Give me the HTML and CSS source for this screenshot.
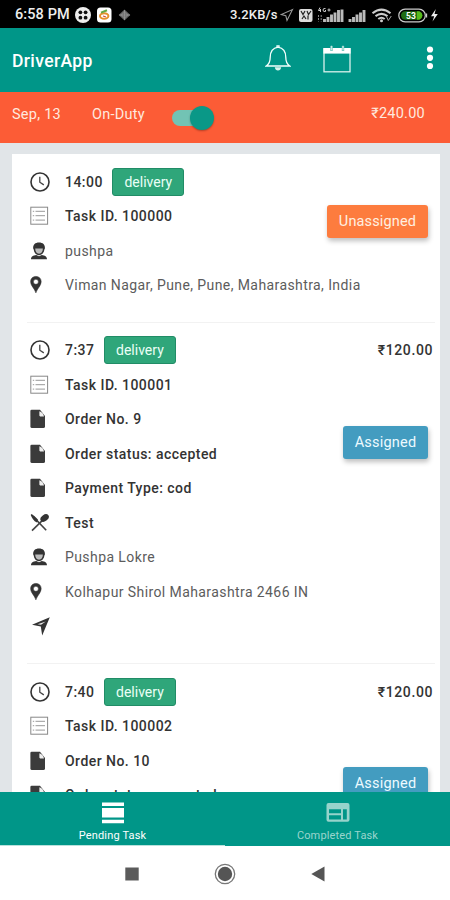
FILE: index.html
```html
<!DOCTYPE html>
<html lang="en">
<head>
<meta charset="utf-8">
<meta name="viewport" content="width=device-width, initial-scale=1">
<title>DriverApp</title>
<link rel="stylesheet" href="styles.css">
</head>
<body>
<svg class="sprite" aria-hidden="true">
  <symbol id="clock" viewBox="0 0 20 20"><circle cx="10" cy="10" r="9" fill="none" stroke="#333" stroke-width="1.6"/><path d="M9.8 4.8v5.4l4 2.7" fill="none" stroke="#444" stroke-width="1.3"/></symbol>
  <symbol id="list" viewBox="0 0 20 20"><rect x=".8" y="1.2" width="16.8" height="17" fill="none" stroke="#888" stroke-width="1"/><path d="M5.5 5.3H15M5.5 9.7H15M5.5 14.1H15M2.8 5.3h1.4M2.8 9.7h1.4M2.8 14.1h1.4" stroke="#999" stroke-width="1"/></symbol>
  <symbol id="doc" viewBox="0 0 20 20"><path d="M1.600 .8H10L15 7V17.400Q15 19 13.400 19H2Q.4 19 .4 17.400V2Q.4 .8 1.600 .8Z" fill="#3b3b3b"/><path d="M9.400 2.200C11.800 3 13.600 4.900 14 7.400H10.200Q9.400 7.400 9.400 6.600Z" fill="#eee"/></symbol>
  <symbol id="person" viewBox="0 0 20 20"><path d="M3.2 7.6C2.8 3.4 5.2 1.4 9 1.4s6.3 2 5.9 6.2l-.6 1.2c-.4 3.2-2.6 5.400-5.300 5.400S4.200 12 3.800 8.800Z" fill="#333"/><path d="M5.200 7.600h7.700c0 3.100-1.500 5.200-3.900 5.200S5.200 10.700 5.200 7.600Z" fill="#bbb"/><path d="M1 18.200c0-2.800 2.200-3.600 5.200-4.200l2.800 1.300 2.800-1.300c3 .6 5.200 1.400 5.200 4.200Z" fill="#333"/></symbol>
  <symbol id="pin" viewBox="0 0 20 20"><path fill-rule="evenodd" d="M5.900 1.400C2.700 1.400.6 3.600.6 6.700c0 4 4 6.800 5.300 11.200C7.200 13.500 11.200 10.700 11.200 6.700c0-3.100-2.100-5.300-5.300-5.300Zm0 2.900a2.500 2.500 0 1 1 0 5 2.500 2.500 0 0 1 0-5Z" fill="#333" stroke="#333" stroke-width=".5"/></symbol>
  <symbol id="food" viewBox="0 0 20 20"><path d="M1.300 1.600 16.200 17.300" stroke="#444" stroke-width="1.600"/><path d="M.8 1.200Q4.200 2 8 6.800L7 9.600Q2 7 .8 1.200Z" fill="#333"/><path d="M12.200 7.600 2 17.600" stroke="#444" stroke-width="1.600"/><ellipse cx="14.600" cy="5" rx="4.600" ry="3.200" transform="rotate(-35 14.600 5)" fill="#333"/></symbol>
  <symbol id="nav" viewBox="0 0 20 20"><path d="M19.800 1.200 12.200 19.400 10.800 10.400 2 8.800Z" fill="#333"/><path d="M15.800 5.500 11 8.700 7.500 8.300Z" fill="#eee"/></symbol>
</svg>
<div class="phone">
  <header class="status">
    <span class="status-time">6:58 PM</span>
    <svg class="status-left" width="56" height="18" viewBox="0 0 56 18">
      <circle cx="8" cy="9" r="8" fill="#eee"/>
      <path d="M8 2.500v3.500M8 12v3.500M1.500 9H5M11 9h3.500" stroke="#eee" stroke-width="1"/><g fill="#111"><circle cx="5.400" cy="6.300" r="1.900"/><circle cx="10.600" cy="6.300" r="1.900"/><circle cx="5.400" cy="11.700" r="1.900"/><circle cx="10.600" cy="11.700" r="1.900"/></g>
      <rect x="22" y="1.500" width="14.500" height="15" rx="3.500" fill="#fff"/>
      <ellipse cx="29.200" cy="10" rx="4.200" ry="2.800" fill="none" stroke="#e5902c" stroke-width="2"/><path d="M26 6.600 32 4.200" stroke="#65a845" stroke-width="2"/><path d="m28 10 3 1" stroke="#d44a35" stroke-width="1.300"/>
      <path d="m49.500 3.500 5.800 5.500-5.800 5.500L43.700 9Z" fill="#666"/><path d="m49.500 6 3.200 3-3.200 3-3.200-3ZM49.500 4v10M44 9h11" fill="none" stroke="#999" stroke-width=".7"/>
    </svg>
    <span class="status-speed">3.2KB/s</span>
    <svg class="status-right" width="160" height="20" viewBox="0 0 160 20">
      <path d="M12.500 4.500 7 15.500 5.800 10.600 1.200 9.500Z" fill="none" stroke="#999" stroke-width="1.100"/>
      <rect x="19" y="4" width="13.500" height="13" rx="2" fill="#ddd"/><path d="m21 6 2 3.500L25 6m2 0 1.500 3.500L31 6M22 14l2-3 2 3m2-3.500v4" fill="none" stroke="#222" stroke-width="1.200"/>
      <path d="M40 2.500 38.500 5.500H41M40.500 4v3M45.500 3.500q-2.500-.5-2.500 1.500t2.500 1.500V5M47.500 5h3M49 3.500v3" fill="none" stroke="#ccc" stroke-width="1"/>
      <path d="M38.500 10v6.500M41.200 10v6.500" stroke="#888" stroke-width="1" stroke-dasharray="2 1"/>
      <path d="M45.500 17v-3M49 17v-5M52.500 17V9.500M56 17V7.500M59.500 17V5M63 17V4.500" transform="translate(-1 0)" stroke="#bbb" stroke-width="2.900"/>
      <path d="M70 17v-3M73.500 17v-5M77 17V9.500M80.500 17V7.500M84 17V5" stroke="#bbb" stroke-width="2.900"/>
      <g fill="none" stroke="#ccc" stroke-width="2.100"><path d="M92.500 8.200Q101.500 1 110.500 8.200"/><path d="M95.500 11.200Q101.500 6.500 107.500 11.200"/><path d="M98.300 14Q101.500 11.500 104.700 14"/></g><circle cx="101.500" cy="15.800" r="1.500" fill="#ccc"/><path d="m106.500 11.500 1.800 4 3-4.500" fill="none" stroke="#aaa"/>
      <rect x="118.800" y="4.200" width="26.500" height="12.600" rx="6.300" fill="none" stroke="#ccc" stroke-width="1.200"/><rect x="121" y="6.300" width="20" height="8.400" rx="4.200" fill="#1f6d14"/><path d="M137 6.300h2.500q3 1.500 3 4.200t-3 4.200H137Z" fill="#56bb1b"/><path d="M146.500 8.500v4" stroke="#ccc" stroke-width="1.300"/>
      <text x="126" y="14" class="battery">53</text>
      <path d="m155.800 4-4.800 7.200h3.200l-1.700 5.300 5.300-7.500h-3.300Z" fill="#eee"/>
    </svg>
  </header>

  <div class="appbar">
    <h1>DriverApp</h1>
    <svg class="bell" width="26" height="28" viewBox="0 0 26 28" fill="none" stroke="#f2fffd" stroke-width="1.300"><path d="M1.200 22Q5.200 19.500 5.200 13.500C5.200 7.500 8 4 13 3.200c5 .8 7.800 4.300 7.800 10.300q0 6 4 8.500Z"/><path d="M12 3.200V1.800h2v1.400"/><path d="M9.800 23.200h6.400q-.6 3.200-3.200 3.200t-3.200-3.200Z" fill="#d7f3ee" stroke="none"/></svg>
    <svg class="calendar" width="28" height="28" viewBox="0 0 28 28"><rect x="1" y="3.800" width="26" height="23" fill="none" stroke="#d9f1ed" stroke-width="1.300"/><path d="M.4 3H27.600V8.600H.4Z" fill="#fff"/><path d="M8.500 1v5M20 1v5" stroke="#6fc2b8" stroke-width="2.400"/><path d="M8.500 .8v4.500M20 .8v4.500" stroke="#c6e9e4" stroke-width="1.300"/></svg>
    <svg class="more" width="8" height="24" viewBox="0 0 8 24" fill="#fff"><circle cx="4" cy="3.500" r="3.100"/><circle cx="4" cy="11.800" r="3.100"/><circle cx="4" cy="20" r="3.100"/></svg>
  </div>

  <div class="duty">
    <span class="duty-date">Sep, 13</span>
    <span class="duty-label">On-Duty</span>
    <span class="switch"><i></i></span>
    <span class="duty-total">₹240.00</span>
  </div>

  <main class="content">
    <section class="card">
      <article class="task">
        <div class="rows">
          <div class="row strong"><svg><use href="#clock"/></svg><span>14:00</span><b class="tag">delivery</b></div>
          <div class="row strong"><svg><use href="#list"/></svg><span>Task ID. 100000</span></div>
          <div class="row"><svg><use href="#person"/></svg><span>pushpa</span></div>
          <div class="row"><svg><use href="#pin"/></svg><span>Viman Nagar, Pune, Pune, Maharashtra, India</span></div>
        </div>
        <div class="side"><span class="btn unassigned">Unassigned</span></div>
      </article>
      <article class="task">
        <div class="rows">
          <div class="row strong"><svg><use href="#clock"/></svg><span>7:37</span><b class="tag">delivery</b></div>
          <div class="row strong"><svg><use href="#list"/></svg><span>Task ID. 100001</span></div>
          <div class="row strong"><svg><use href="#doc"/></svg><span>Order No. 9</span></div>
          <div class="row strong"><svg><use href="#doc"/></svg><span>Order status: accepted</span></div>
          <div class="row strong"><svg><use href="#doc"/></svg><span>Payment Type: cod</span></div>
          <div class="row strong"><svg><use href="#food"/></svg><span>Test</span></div>
          <div class="row"><svg><use href="#person"/></svg><span>Pushpa Lokre</span></div>
          <div class="row"><svg><use href="#pin"/></svg><span>Kolhapur Shirol Maharashtra 2466 IN</span></div>
          <div class="row"><svg><use href="#nav"/></svg></div>
        </div>
        <div class="side"><span class="price">₹120.00</span><span class="btn assigned">Assigned</span></div>
      </article>
      <article class="task">
        <div class="rows">
          <div class="row strong"><svg><use href="#clock"/></svg><span>7:40</span><b class="tag">delivery</b></div>
          <div class="row strong"><svg><use href="#list"/></svg><span>Task ID. 100002</span></div>
          <div class="row strong"><svg><use href="#doc"/></svg><span>Order No. 10</span></div>
          <div class="row strong"><svg><use href="#doc"/></svg><span>Order status: accepted</span></div>
        </div>
        <div class="side"><span class="price">₹120.00</span><span class="btn assigned">Assigned</span></div>
      </article>
    </section>
  </main>

  <nav class="tabs">
    <div class="tab active"><svg width="24" height="24" viewBox="0 0 24 24" fill="#fff"><path d="M1 1.500h22v3.600H1ZM1 7h22v9.600H1ZM1 18.800h22v3.500H1Z"/></svg><span>Pending Task</span></div>
    <div class="tab"><svg width="24" height="24" viewBox="0 0 24 24"><path fill-rule="evenodd" d="M2.500 2h19q2 0 2 2v14.800q0 2-2 2h-19q-2 0-2-2V4q0-2 2-2ZM3 8.200v4.100h12V8.200ZM3 14.300v4.200h12v-4.200ZM17 8.200v10.300h3.800V8.200Z" fill="#97d3cb"/></svg><span>Completed Task</span></div>
  </nav>
  <footer class="system">
    <svg width="14" height="14" viewBox="0 0 14 14"><path d="M.3 .5h13.400v13H.3Z" fill="#5b5b5b"/></svg>
    <svg width="22" height="22" viewBox="0 0 22 22"><circle cx="11" cy="11" r="9.700" fill="none" stroke="#777" stroke-width="1.300"/><circle cx="11" cy="11" r="7.200" fill="#555"/></svg>
    <svg width="14" height="16" viewBox="0 0 14 16"><path d="M.3 8 13.500 .5v15Z" fill="#555"/></svg>
  </footer>
</div>
</body>
</html>
```
FILE: styles.css
```css
* { box-sizing: border-box; }
body { margin: 0; font-family: Roboto, "Noto Sans", sans-serif; }
.sprite { display: none; }
svg { display: block; flex: none; }
.phone { width: 450px; height: 900px; display: flex; flex-direction: column; overflow: hidden; background: #fff; }

.status { height: 28px; flex: none; display: flex; align-items: center; background: #000; color: #eee; padding: 1px 0 0 15px; }
.status-time { width: 60px; font-size: 14.5px; font-weight: 500; letter-spacing: .1px; white-space: nowrap; }
.status-speed { margin-left: 99px; width: 50px; font-size: 13px; font-weight: 500; letter-spacing: .15px; white-space: nowrap; }
.battery { font-size: 8.5px; font-weight: 700; fill: #fff; }

.appbar { height: 64px; flex: none; display: flex; align-items: center; background: #009688; padding: 2px 0 0 12px; }
.appbar h1 { margin: 0; width: 253px; color: #fff; font-size: 17.5px; font-weight: 500; letter-spacing: .38px; }
.bell { margin-top: -6px; }
.calendar { margin: -5px 0 0 32px; }
.more { margin: -6px 0 0 75px; }

.duty { height: 50.5px; flex: none; display: flex; align-items: center; background: #fc5c36; color: #ffe9df; padding: 0 0 5px 12px; font-size: 14.5px; letter-spacing: .25px; }
.duty-date { width: 80px; }
.duty-label { width: 80px; }
.switch { width: 42px; height: 25px; display: flex; align-items: center; justify-content: flex-end; margin-top: 6px; }
.switch::before { content: ""; width: 30px; height: 16px; margin-right: -12px; border-radius: 8px; background: #72c3b4; }
.switch i { width: 24px; height: 24px; border-radius: 50%; background: #0a9887; box-shadow: 0 1px 2px rgba(0, 0, 0, .3); }
.duty-total { margin: -2px 25px 0 auto; }

.content { height: 649.5px; flex: none; overflow: hidden; background: #e1e5e8; padding: 11.5px 10px 0 12px; }
.card { background: #fff; }
.task { display: grid; padding-top: 10.25px; border-bottom: 1px solid #f2f2f2; border-image: linear-gradient(90deg, #fff 16px, #f2f2f2 16px, #f2f2f2 422px, #fff 422px) 1; }
.rows { grid-area: 1 / 1; padding-bottom: 19.5px; }
.row { height: 34.5px; display: flex; align-items: center; padding-left: 18px; color: #5c5c5c; font-size: 14px; letter-spacing: .41px; white-space: nowrap; }
.row svg { width: 20px; height: 20px; margin-right: 15px; }
.strong { color: #333; font-weight: 500; letter-spacing: .46px; }
.tag { width: 72px; height: 28px; margin-left: 9.5px; display: flex; align-items: center; justify-content: center; color: #eafff6; background: #2fa67a; border: 1px solid #218c66; border-radius: 3px; font-size: 14px; font-weight: 400; letter-spacing: 0; }
.side { grid-area: 1 / 1; justify-self: end; display: flex; flex-direction: column; align-items: flex-end; padding-right: 12px; }
.price { height: 34.5px; margin-right: -5px; display: flex; align-items: center; color: #333; font-size: 14px; font-weight: 500; letter-spacing: .6px; }
.btn { height: 33px; display: flex; align-items: center; justify-content: center; border-radius: 3px; box-shadow: 1px 3px 5px rgba(0, 0, 0, .25); font-size: 14.5px; }
.unassigned { width: 101px; margin-top: 40.75px; background: #fd7c3e; color: #fff0e0; letter-spacing: .15px; }
.assigned { width: 85px; margin-top: 58.25px; background: #439cc0; color: #edfaff; letter-spacing: .2px; }

.tabs { height: 54px; flex: none; display: flex; background: #009688; color: #9bd5cd; }
.tab { width: 50%; display: flex; flex-direction: column; align-items: center; padding-top: 9px; font-size: 11px; letter-spacing: .15px; }
.tab span { margin-top: 4px; }
.active { color: #fff; border-bottom: 1.500px solid #b9e1dc; }
.system { flex: 1; display: flex; justify-content: center; align-items: center; gap: 75px; padding: 1px 0 0 0; }
```
